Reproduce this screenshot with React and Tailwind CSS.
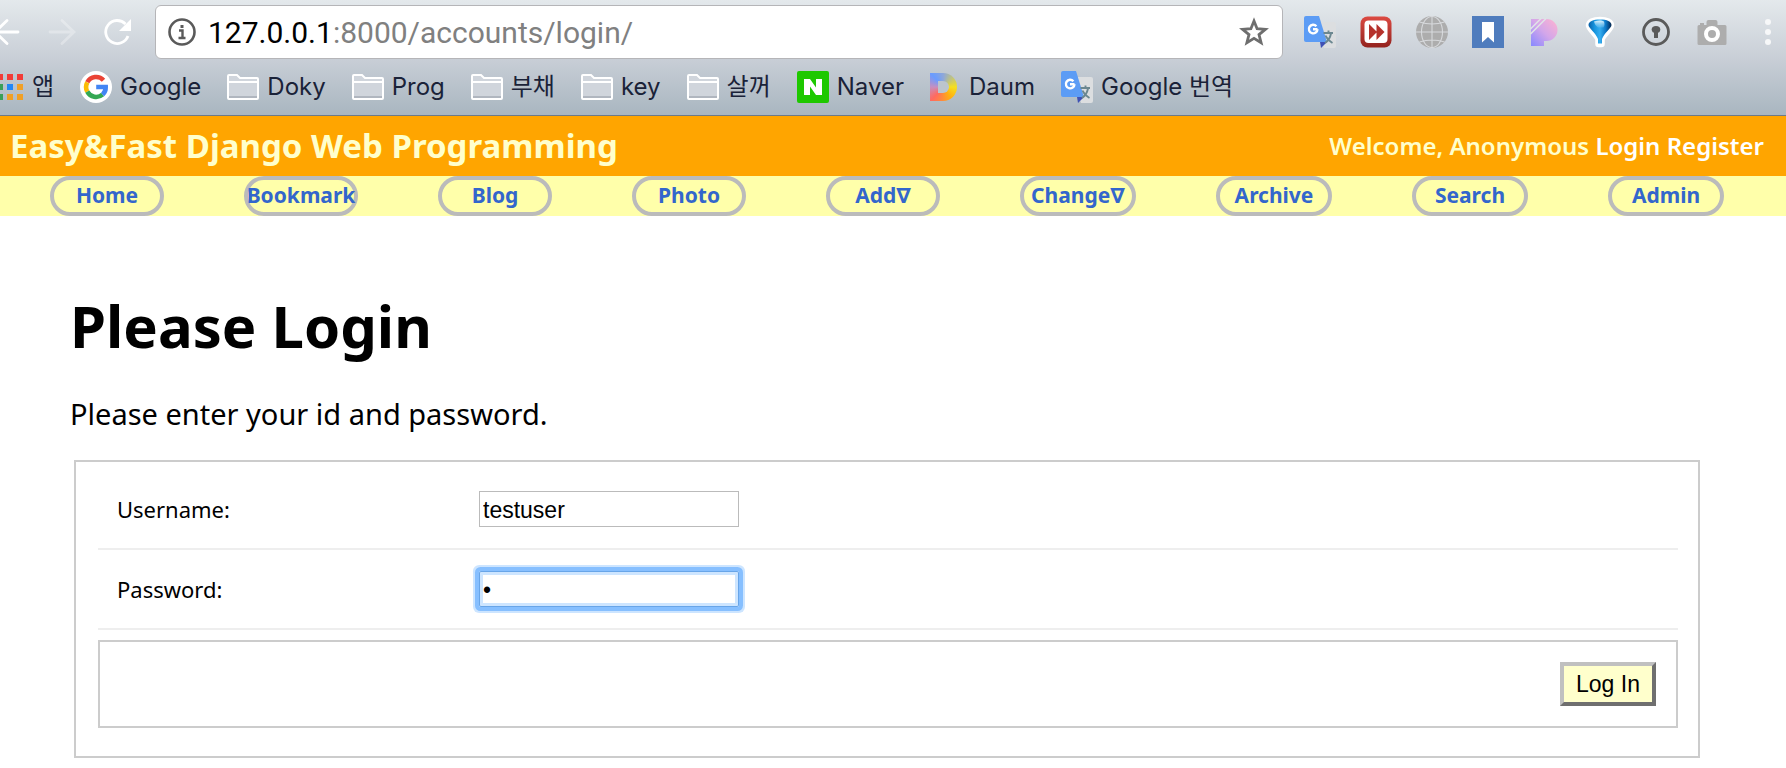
const uiFont = "font-[Inter,Roboto,'Noto_Sans_CJK_KR',sans-serif]";

function TranslateIcon() {
  return (
    <svg viewBox="0 0 32 32" className="size-8 shrink-0" aria-hidden="true">
      <path d="M11 6h19a2 2 0 0 1 2 2v22a2 2 0 0 1-2 2H20z" fill="#dcdee0" />
      <path d="M16 26h7l-6 6z" fill="#3f51b5" />
      <path d="M2 0h13l8 26H2a2 2 0 0 1-2-2V2a2 2 0 0 1 2-2z" fill="#5c9cf5" />
      <path d="M9 13.200h4.500M12.400 10.200A4.300 4.300 0 1 0 13.500 13.200" fill="none" stroke="#fff" strokeWidth="2.400" />
      <path d="M19.500 17h9.500M24.500 14.500V17M27 17.500c-.8 4-3 7.500-6 9.500M21.500 19.500c1.500 3.500 3.500 5.500 7 7.500" fill="none" stroke="#6b8790" strokeWidth="1.900" />
    </svg>
  );
}

function FastForwardIcon() {
  return (
    <svg viewBox="0 0 32 32" className="size-8" aria-hidden="true">
      <defs>
        <linearGradient id="redFrame" x1="0" y1="0" x2="0" y2="1">
          <stop offset="0" stopColor="#dc4a42" />
          <stop offset="1" stopColor="#93231f" />
        </linearGradient>
      </defs>
      <rect x=".5" y=".5" width="31" height="31" rx="7" fill="url(#redFrame)" />
      <rect x="4.500" y="4.500" width="23" height="22.500" rx="4" fill="#fff" />
      <path d="M9 8l8 8-8 8zM16.500 8l8 8-8 8z" fill="#b5322c" />
    </svg>
  );
}

function GlobeIcon() {
  return (
    <svg viewBox="0 0 32 32" className="size-8" aria-hidden="true">
      <circle cx="16" cy="16" r="16" fill="#adadad" />
      <g fill="none" stroke="#d8dadd" strokeWidth="1.100">
        <ellipse cx="16" cy="16" rx="10.500" ry="15.500" />
        <path d="M16 0v32M0 16h32M3.500 6Q16 10 28.500 6M3.500 26Q16 22 28.500 26" />
      </g>
    </svg>
  );
}

function BookmarkIcon() {
  return (
    <svg viewBox="0 0 32 32" className="size-8" aria-hidden="true">
      <path d="M0 0h32v32H0z" fill="#4f7cbd" />
      <path d="M10 6h12v20.500l-6-5.500-6 5.500z" fill="#fff" />
    </svg>
  );
}

function PIcon() {
  return (
    <svg viewBox="0 0 32 32" className="size-8" aria-hidden="true">
      <defs>
        <linearGradient id="pinkViolet" x1="1" y1="0" x2="0" y2="1">
          <stop offset="0" stopColor="#ffb3d0" />
          <stop offset=".5" stopColor="#d3a6ea" />
          <stop offset="1" stopColor="#8788ff" />
        </linearGradient>
      </defs>
      <path d="M3 3h15.500a11 11 0 0 1 0 22H16v5H3z" fill="url(#pinkViolet)" />
      <path d="M2.500 13L13 2.500M2.500 18L18 2.500" stroke="#e0e2e8" strokeWidth="1.600" />
    </svg>
  );
}

function BalloonIcon() {
  return (
    <svg viewBox="0 0 32 32" className="size-8" aria-hidden="true">
      <defs>
        <linearGradient id="balloon" x1="0" y1="0" x2="1" y2="0">
          <stop offset="0" stopColor="#0a5fa5" />
          <stop offset=".25" stopColor="#1593dd" />
          <stop offset=".5" stopColor="#35aef0" />
          <stop offset=".75" stopColor="#0a76c6" />
          <stop offset="1" stopColor="#04264f" />
        </linearGradient>
        <linearGradient id="gloss" x1="0" y1="0" x2="0" y2="1">
          <stop offset="0" stopColor="#e2f4fd" />
          <stop offset="1" stopColor="#8ccff5" stopOpacity=".3" />
        </linearGradient>
      </defs>
      <path d="M16 4C9.500 4 5 6 5 9.500c0 3 6.500 8 9.500 13.500v5h3v-5C20.500 17.500 27 12.500 27 9.500 27 6 22.500 4 16 4z" fill="#fff" stroke="#fff" strokeWidth="6.500" strokeLinejoin="round" />
      <path d="M16 3.500C9 3.500 4.500 5.500 4.500 9c0 3 7 7.500 9.500 14v4.500h4V23c2.500-6.500 9.500-11 9.500-14 0-3.500-4.500-5.500-11.500-5.500z" fill="url(#balloon)" />
      <path d="M10 5.500c4-1.500 8-1.500 10 0 .8 2.500.5 4.500-.5 6h-5.500c-2-1.500-3.500-3.500-4-6z" fill="url(#gloss)" />
    </svg>
  );
}

function KeyholeIcon() {
  return (
    <svg viewBox="0 0 32 32" className="size-8" aria-hidden="true">
      <circle cx="16" cy="16" r="12.500" fill="none" stroke="#5a5a5a" strokeWidth="2.800" />
      <ellipse cx="16" cy="13.500" rx="4.300" ry="3.600" fill="#5a5a5a" />
      <path d="M14 15h4v7h-4z" fill="#5a5a5a" />
    </svg>
  );
}

function CameraIcon() {
  return (
    <svg viewBox="0 0 32 32" className="size-8" aria-hidden="true">
      <path d="M4 9V7h4v2h2.500V6a2 2 0 0 1 2-2h7a2 2 0 0 1 2 2v3H29a1.500 1.500 0 0 1 1.500 1.500v17A1.500 1.500 0 0 1 29 29H3a1.500 1.500 0 0 1-1.500-1.500v-17A1.500 1.500 0 0 1 3 9z" fill="#adadad" />
      <circle cx="16" cy="18" r="6" fill="none" stroke="#fff" strokeWidth="4" />
    </svg>
  );
}

function AppsIcon() {
  return (
    <svg viewBox="0 0 24 26" className="h-[26px] w-6" aria-hidden="true">
      <path d="M0 0h3v6H0zM7 0h6v6H7zM17 0h6v6h-6z" fill="#f23c38" />
      <path d="M0 10h3v6H0z" fill="#3a9f58" />
      <path d="M7 10h6v6H7z" fill="#2287f5" />
      <path d="M17 10h6v6h-6zM7 20h6v6H7zM17 20h6v6h-6z" fill="#f0a026" />
      <path d="M0 20h3v6H0z" fill="#3a9f58" />
    </svg>
  );
}

function GoogleIcon() {
  return (
    <svg viewBox="0 0 32 32" className="size-8" aria-hidden="true">
      <circle cx="16" cy="16" r="16" fill="#fff" />
      <g fill="none" strokeWidth="4.600">
        <path d="M23.500 9.200A10 10 0 0 0 7.300 11.300" stroke="#ea4335" />
        <path d="M7.300 11.300A10 10 0 0 0 7.300 20.700" stroke="#fbbc05" />
        <path d="M7.300 20.700A10 10 0 0 0 22.600 23.600" stroke="#34a853" />
        <path d="M22.600 23.600A10 10 0 0 0 25.700 16H16.200" stroke="#4285f4" />
      </g>
    </svg>
  );
}

function FolderIcon() {
  return (
    <svg viewBox="0 0 32 26" className="h-[26px] w-8" aria-hidden="true">
      <path d="M1 24V2a1 1 0 0 1 1-1h8l3 3h17a1 1 0 0 1 1 1v19z" fill="#d0d5dc" />
      <path d="M1 22h30v2H1z" fill="#b0b6bf" />
      <path d="M1 8h30M1 24V2a1 1 0 0 1 1-1h8l3 3h17a1 1 0 0 1 1 1v19a1 1 0 0 1-1 1H2a1 1 0 0 1-1-1z" fill="none" stroke="#fff" strokeWidth="2" />
    </svg>
  );
}

function NaverIcon() {
  return (
    <svg viewBox="0 0 32 32" className="size-8" aria-hidden="true">
      <rect width="32" height="32" rx="2" fill="#1ec800" />
      <path d="M7 8h6l6 8.500V8h6v16h-6l-6-8.500V24H7z" fill="#fff" />
    </svg>
  );
}

function DaumIcon() {
  return (
    <span className="mr-1 block h-7 w-[27px] rounded-r-[14px] bg-[conic-gradient(from_0deg,#8fa8d8,#f5e020_25%,#ffb010_40%,#ff6a60_62%,#c68fc0_75%,#6a9cff_88%,#8fa8d8)] p-2">
      <span className="block h-3 w-[11px] rounded-r-md bg-[#bcc5ce]" />
    </span>
  );
}

const folder = <FolderIcon />;
const bookmarks = [
  { label: "Google", icon: <GoogleIcon /> },
  { label: "Doky", icon: folder },
  { label: "Prog", icon: folder },
  { label: "부채", icon: folder },
  { label: "key", icon: folder },
  { label: "살꺼", icon: folder },
  { label: "Naver", icon: <NaverIcon /> },
  { label: "Daum", icon: <DaumIcon /> },
  { label: "Google 번역", icon: <TranslateIcon /> },
];

const extensions = [
  ["Translate", TranslateIcon],
  ["Fast forward", FastForwardIcon],
  ["Globe", GlobeIcon],
  ["Save bookmark", BookmarkIcon],
  ["Pastel", PIcon],
  ["Balloon", BalloonIcon],
  ["Keyhole", KeyholeIcon],
  ["Screenshot", CameraIcon],
];

function BrowserBar() {
  return (
    <div className={`${uiFont} border-b border-[#6d7a88] bg-linear-to-b from-[#e4e9ec] via-[#c9cfd7] to-[#a9b6c0]`}>
      <div className="flex items-center pt-[5px]">
        <div className="flex w-[155px] shrink-0 items-center text-white">
          <button aria-label="Back" className="w-5">
            <svg viewBox="0 0 20 32" className="h-8 w-5" fill="none" stroke="currentColor" strokeWidth="2.800" strokeLinecap="round">
              <path d="M-6 16H18M7 4.500L-5 16 7 27.500" />
            </svg>
          </button>
          <button aria-label="Forward" className="ml-7">
            <svg viewBox="0 0 28 32" className="h-8 w-7 opacity-30" fill="none" stroke="currentColor" strokeWidth="2.800" strokeLinecap="round">
              <path d="M2 16H26M14 4.500L26 16 14 27.500" />
            </svg>
          </button>
          <button aria-label="Reload" className="ml-6">
            <svg viewBox="0 0 32 32" className="size-8">
              <path d="M25.500 8A11.500 11.500 0 1 0 28 20" fill="none" stroke="currentColor" strokeWidth="2.800" />
              <path d="M31 3v12H19z" fill="currentColor" />
            </svg>
          </button>
        </div>
        <div className="flex h-[54px] grow items-center gap-3 rounded-md border border-[#b5b5b8] bg-white pr-3 pl-3">
          <svg viewBox="0 0 28 28" className="size-7 shrink-0" fill="none" stroke="#5a5a5a" strokeWidth="2.600" aria-hidden="true">
            <circle cx="14" cy="14" r="12.500" />
            <path d="M11 12.500h3.500V20M10.500 20h7" strokeWidth="2.400" />
            <path d="M14 7v3" strokeWidth="3" />
          </svg>
          <div role="textbox" aria-label="Address" className="grow pt-px font-[Roboto,sans-serif] text-[30px] leading-8 text-[#808080]">
            <span className="text-black">127.0.0.1</span>:8000/accounts/login/
          </div>
          <button aria-label="Bookmark this page">
            <svg viewBox="0 0 32 32" className="size-8" fill="none" stroke="#6e6e6e" strokeWidth="2.800">
              <path d="M16 5l3.100 7.700 8.300.6-6.400 5.300 2.100 8.100L16 22.300l-7.100 4.400 2.100-8.100-6.400-5.300 8.300-.6z" />
            </svg>
          </button>
        </div>
        <div className="ml-[21px] flex shrink-0 items-center gap-6">
          {extensions.map(([name, Icon]) => (
            <button key={name} aria-label={name}>
              <Icon />
            </button>
          ))}
          <button aria-label="Menu" className="w-[34px]">
            <svg viewBox="0 0 34 32" className="h-8 w-[34px]" fill="#f7f8f9">
              <circle cx="16" cy="6" r="3" />
              <circle cx="16" cy="16" r="3" />
              <circle cx="16" cy="26" r="3" />
            </svg>
          </button>
        </div>
      </div>
      <nav aria-label="Bookmarks" className="flex h-14 items-center gap-[26px] text-[24px] leading-8 text-[#1a2238]">
        <a href="#apps" className="flex items-center gap-2">
          <AppsIcon />앱
        </a>
        {bookmarks.map(({ label, icon }) => (
          <a key={label} href="#bookmark" className="flex items-center gap-2 whitespace-nowrap">
            {icon}
            {label}
          </a>
        ))}
      </nav>
    </div>
  );
}

const menu = ["Home", "Bookmark", "Blog", "Photo", "Add∇", "Change∇", "Archive", "Search", "Admin"];

function SiteHeader() {
  return (
    <header>
      <div className="flex h-[60px] items-center justify-between bg-[#ffa500] pr-[22px] pl-[10px] text-[#ffffcc]">
        <div className="text-[33px] leading-10 font-bold">Easy&amp;Fast Django Web Programming</div>
        <div className="text-2xl font-semibold">
          Welcome, Anonymous <a href="#login" className="text-white">Login</a>{" "}
          <a href="#register" className="text-white">Register</a>
        </div>
      </div>
      <nav aria-label="Main" className="grid grid-cols-[repeat(5,194fr)_repeat(4,196fr)] justify-items-center bg-[#ffffaa] pr-[22px] pl-[10px]">
        {menu.map((item) => (
          <a
            key={item}
            href="#menu"
            className="flex h-10 w-[59%] items-center justify-center rounded-[20px] border-4 border-[#bbbbbb] text-[21px] font-bold text-[#3366cc]"
          >
            {item}
          </a>
        ))}
      </nav>
    </header>
  );
}

export default function App() {
  return (
    <div className="bg-white font-['Noto_Sans','DejaVu_Sans',sans-serif] text-black">
      <BrowserBar />
      <SiteHeader />
      <main className="pt-[78px] pr-[86px] pl-[70px]">
        <h1 className="text-[58px] leading-[64px] font-bold">Please Login</h1>
        <p className="mt-9 text-[29px] leading-10">Please enter your id and password.</p>
        <form className="mt-[26px] ml-1 border-2 border-[#cccccc] pt-[8px] pr-5 pb-7 pl-[22px] text-[22px]" onSubmit={(e) => e.preventDefault()}>
          <div className="flex h-20 items-center border-b-2 border-[#eeeeee] pl-[19px]">
            <label htmlFor="username" className="w-[362px]">Username:</label>
            <input id="username" type="text" defaultValue="testuser" className="h-9 w-[260px] border border-[#bbbbbb] px-[3px] pt-[2px] font-['Liberation_Sans',Arial,sans-serif] text-[23px] outline-none" />
          </div>
          <div className="flex h-20 items-center border-b-2 border-[#eeeeee] pl-[19px]">
            <label htmlFor="password" className="w-[362px]">Password:</label>
            <input id="password" type="password" defaultValue="a" className="h-9 w-[260px] rounded-xs border border-[#68a5e8] px-[3px] pt-[2px] font-['Liberation_Sans',Arial,sans-serif] text-[23px] shadow-[0_0_0_4px_#86bfff,0_0_0_6px_#cde5ff,inset_0_0_0_3px_#cde5ff] outline-none" />
          </div>
          <div className="mt-[10px] flex h-[88px] items-center justify-end border-2 border-[#cccccc] pr-5">
            <button type="submit" className="h-11 w-24 border-4 border-t-[#c0c0c0] border-r-[#6f6f6f] border-b-[#6f6f6f] border-l-[#c0c0c0] bg-[#ffffcc] font-['Liberation_Sans',Arial,sans-serif] text-[23px] leading-8">
              Log In
            </button>
          </div>
        </form>
      </main>
    </div>
  );
}
